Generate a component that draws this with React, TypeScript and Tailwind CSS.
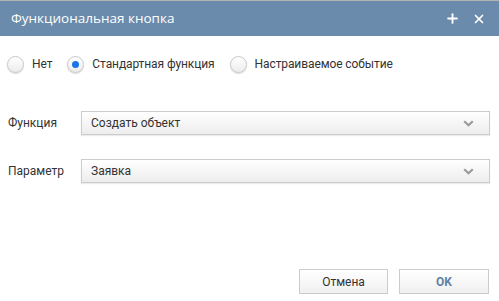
import { Plus, X } from "lucide-react";

const options = [
  { label: "Нет", checked: false },
  { label: "Стандартная функция", checked: true },
  { label: "Настраиваемое событие", checked: false },
];

const fields = [
  { label: "Функция", value: "Создать объект" },
  { label: "Параметр", value: "Заявка" },
];

function Radio({ checked }: { checked: boolean }) {
  return (
    <span className="flex size-[17px] items-center justify-center rounded-full border border-[#c8c8c8] bg-gradient-to-b from-white to-[#ececec] shadow-[0_1px_1px_rgba(0,0,0,0.15)]">
      {checked && <span className="size-[7px] rounded-full bg-[#1a73e8]" />}
    </span>
  );
}

function Chevron() {
  return (
    <svg width="11" height="7" viewBox="0 0 11 7" fill="none">
      <path d="M1.2 1.2 5.5 5.3l4.3-4.1" stroke="#9a9a9a" strokeWidth="2.2" />
    </svg>
  );
}

export default function App() {
  return (
    <div className="flex h-[301px] w-[499px] flex-col border-t border-[#b4b4b4] bg-white font-['Roboto',sans-serif] text-[12px] text-[#333]">
      <div className="flex h-[35px] items-center justify-between bg-[#6a8bab] pl-[11px] pr-[13px] text-white">
        <span className="font-['Open_Sans',sans-serif] text-[13.5px]">Функциональная кнопка</span>
        <div className="flex items-center gap-[12px]">
          <Plus className="size-[15px]" strokeWidth={3} />
          <X className="size-[14px]" strokeWidth={3} />
        </div>
      </div>

      <div className="mt-[19px] flex items-center pl-[7px]">
        {options.map((o) => (
          <label key={o.label} className="mr-[15px] flex items-center gap-[8px]">
            <Radio checked={o.checked} />
            <span className="tracking-[-0.1px]">{o.label}</span>
          </label>
        ))}
      </div>

      <div className="mt-[38px] flex flex-col gap-[24px] pl-[8px] pr-[9px]">
        {fields.map((f) => (
          <div key={f.label} className="flex items-center">
            <span className="w-[73px]">{f.label}</span>
            <div className="flex h-[24px] flex-1 items-center justify-between border border-[#cccccc] bg-gradient-to-b from-white to-[#ededed] pl-[9px] pr-[15px] shadow-[0_1px_1px_rgba(0,0,0,0.08)]">
              <span>{f.value}</span>
              <Chevron />
            </div>
          </div>
        ))}
      </div>

      <div className="mt-auto mb-[7px] flex justify-end gap-[11px] pr-[10px]">
        <button className="h-[25px] w-[89px] border border-[#cccccc] bg-gradient-to-b from-white to-[#f0f0f0]">
          Отмена
        </button>
        <button className="h-[25px] w-[90px] border border-[#cccccc] bg-gradient-to-b from-white to-[#f0f0f0] font-bold text-[#5f82a8]">
          OK
        </button>
      </div>
    </div>
  );
}
